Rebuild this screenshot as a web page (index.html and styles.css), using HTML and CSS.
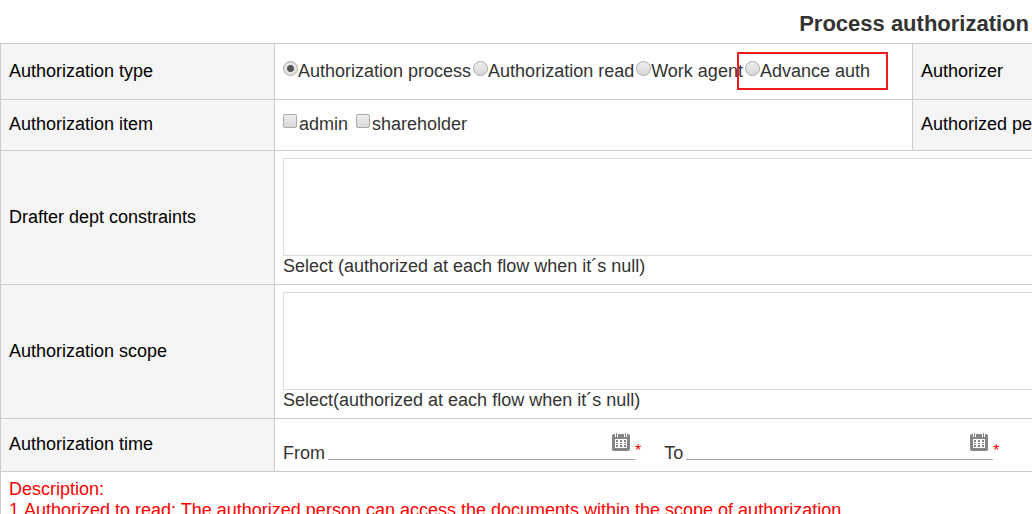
FILE: index.html
```html
<!DOCTYPE html>
<html lang="en">
<head>
<meta charset="utf-8">
<title>Process authorization</title>
<link rel="stylesheet" href="styles.css">
</head>
<body>
<svg class="symbols" aria-hidden="true">
  <symbol id="calendar" viewBox="0 0 18 18">
    <path d="M0 3Q0 1 2 1H3V4H15V1H16Q18 1 18 3V16Q18 18 16 18H2Q0 18 0 16Z" fill="#858585"/>
    <path d="M3 0H15V4H3Z" fill="#fff"/>
    <path d="M4 0H5V4H4ZM13 0H14V4H13ZM6 1H12V4H6Z" fill="#858585"/>
    <path d="M3 6H15V15H3Z" fill="#fff"/>
    <path d="M4 7H6V9H4ZM8 7H10V9H8ZM12 7H14V9H12ZM4 10H6V11H4ZM8 10H10V11H8ZM12 10H14V11H12ZM4 12H6V14H4ZM8 12H10V14H8ZM12 12H14V14H12Z" fill="#858585"/>
  </symbol>
</svg>
<form class="page">
  <h1 class="title">Process authorization</h1>
  <table class="sheet">
    <colgroup><col class="col-label"><col><col class="col-side"></colgroup>
    <tr class="row-type">
      <th scope="row">Authorization type</th>
      <td>
        <div class="options">
          <label class="option"><input class="radio" type="radio" name="type" checked>Authorization process</label>
          <label class="option"><input class="radio" type="radio" name="type">Authorization read</label>
          <label class="option"><input class="radio" type="radio" name="type">Work agent</label>
          <label class="option marked"><input class="radio" type="radio" name="type">Advance auth</label>
        </div>
      </td>
      <th scope="row">Authorizer</th>
    </tr>
    <tr class="row-item">
      <th scope="row">Authorization item</th>
      <td>
        <div class="options items">
          <label class="option"><input class="check" type="checkbox">admin</label>
          <label class="option"><input class="check" type="checkbox">shareholder</label>
        </div>
      </td>
      <th scope="row">Authorized person</th>
    </tr>
    <tr>
      <th scope="row"><label for="dept">Drafter dept constraints</label></th>
      <td class="area-cell" colspan="2">
        <textarea id="dept" class="area"></textarea>
        <div>Select (authorized at each flow when it´s null)</div>
      </td>
    </tr>
    <tr>
      <th scope="row"><label for="scope">Authorization scope</label></th>
      <td class="area-cell" colspan="2">
        <textarea id="scope" class="area"></textarea>
        <div>Select(authorized at each flow when it´s null)</div>
      </td>
    </tr>
    <tr class="row-time">
      <th scope="row">Authorization time</th>
      <td class="time-cell" colspan="2">
        <div class="period">
          <label for="from">From</label>
          <span class="date"><input id="from" class="date-input" type="text"><button class="pick" type="button" aria-label="Pick start date"><svg class="icon"><use href="#calendar"/></svg></button></span>
          <span class="required">*</span>
          <label class="to" for="to">To</label>
          <span class="date"><input id="to" class="date-input" type="text"><button class="pick" type="button" aria-label="Pick end date"><svg class="icon"><use href="#calendar"/></svg></button></span>
          <span class="required">*</span>
        </div>
      </td>
    </tr>
    <tr>
      <td class="description" colspan="3">
        <div>Description:</div>
        <div>1.Authorized to read: The authorized person can access the documents within the scope of authorization.</div>
      </td>
    </tr>
  </table>
</form>
</body>
</html>
```
FILE: styles.css
```css
* { box-sizing: border-box; }
body {
  margin: 0;
  background: #fff;
  color: #333;
  font: 18px/20px "Liberation Sans", Arial, sans-serif;
}
.symbols { display: none; }
.page { height: 100vh; overflow: hidden; }
.title {
  margin: 0;
  padding: 10px 3px 5px;
  font-size: 22px;
  line-height: 28px;
  text-align: right;
}
.sheet {
  width: 100%;
  table-layout: fixed;
  border-spacing: 0;
}
.col-label { width: 274px; }
.col-side { width: 120px; }
th, td {
  padding: 0 0 2px 8px;
  border: solid #ccc;
  border-width: 1px 0 0 1px;
  text-align: left;
  vertical-align: middle;
  white-space: nowrap;
  overflow: hidden;
}
th { background: #f5f5f5; color: #000; font-weight: normal; }
.row-type { height: 56px; }
.row-item { height: 51px; }
.row-time { height: 53px; }
.options { display: flex; gap: 2px; align-items: center; }
.items { gap: 8px; }
.option { display: flex; align-items: center; }
.marked {
  height: 38px;
  padding: 0 16px 0 6px;
  margin-left: -8px;
  border: 2px solid #f01c1c;
}
.radio, .check {
  appearance: none;
  flex: none;
  margin: 0 0 4px;
  border: 1px solid #aaa;
  background: linear-gradient(#eee, #d8d8d8);
}
.radio { width: 15px; height: 15px; border-radius: 50%; }
.radio:checked { background: radial-gradient(circle, #555 0 3px, #e4e4e4 4px); }
.check { width: 14px; height: 14px; margin: 0 2px 6px 0; border-radius: 2px; }
.area-cell { padding: 7px 0 8px 8px; }
.area {
  display: block;
  width: 100%;
  height: 98px;
  border: 1px solid #ddd;
  border-right: 0;
  resize: none;
  font: inherit;
}
.time-cell { padding-bottom: 0; }
.period { display: flex; align-items: flex-end; padding-top: 2px; }
.date {
  display: flex;
  align-items: center;
  width: 307px;
  height: 28px;
  margin-left: 3px;
  padding: 0 5px 7px 0;
  border-bottom: 1px solid #aaa;
}
.date-input { flex: 1; min-width: 0; border: 0; outline: 0; background: none; font: inherit; }
.pick { display: flex; padding: 0; border: 0; background: none; }
.icon { width: 18px; height: 18px; }
.required { color: #f00; font-size: 16px; line-height: 18px; }
.to { margin-left: 23px; }
.period label { line-height: 14px; }
.description { padding: 7px 0 0 8px; color: #f00; line-height: 21px; }
```
